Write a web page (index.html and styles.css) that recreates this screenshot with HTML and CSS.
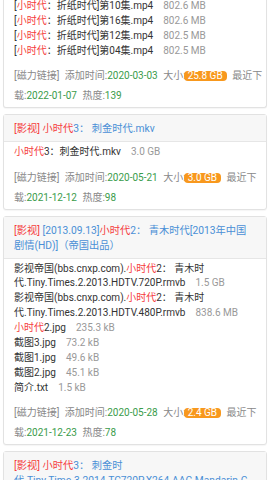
FILE: index.html
```html
<!DOCTYPE html>
<html lang="zh-CN">
<head>
<meta charset="utf-8">
<meta name="viewport" content="width=device-width, initial-scale=1">
<title>小时代 - 搜索结果</title>
<link rel="stylesheet" href="styles.css">
</head>
<body>
<div class="list">
  <div class="card card-cut">
    <div class="card-body">
      <ul class="files">
        <li>[<em class="hl">小时代</em>：折纸时代]第10集.mp4<span class="size">802.6 MB</span></li>
        <li>[<em class="hl">小时代</em>：折纸时代]第16集.mp4<span class="size">802.6 MB</span></li>
        <li>[<em class="hl">小时代</em>：折纸时代]第12集.mp4<span class="size">802.5 MB</span></li>
        <li>[<em class="hl">小时代</em>：折纸时代]第04集.mp4<span class="size">802.5 MB</span></li>
      </ul>
      <div class="meta">
        <span>[磁力链接]</span>
        <span>添加时间:<b>2020-03-03</b></span>
        <span>大小:<span class="badge">25.8 GB</span></span>
        <span>最近下载:<b>2022-01-07</b></span>
        <span>热度:<b>139</b></span>
      </div>
    </div>
  </div>

  <div class="card">
    <div class="card-head"><span class="tag">[影视]</span> <em class="hl">小时代</em>3： 刺金时代.mkv</div>
    <div class="card-body">
      <ul class="files">
        <li><em class="hl">小时代</em>3：刺金时代.mkv<span class="size">3.0 GB</span></li>
      </ul>
      <div class="meta">
        <span>[磁力链接]</span>
        <span>添加时间:<b>2020-05-21</b></span>
        <span>大小:<span class="badge">3.0 GB</span></span>
        <span>最近下载:<b>2021-12-12</b></span>
        <span>热度:<b>98</b></span>
      </div>
    </div>
  </div>

  <div class="card">
    <div class="card-head"><span class="tag">[影视]</span> [2013.09.13]<em class="hl">小时代</em>2： 青木时代[2013年中国剧情(HD)]（帝国出品）</div>
    <div class="card-body">
      <ul class="files">
        <li>影视帝国(bbs.cnxp.com).<em class="hl">小时代</em>2： 青木时代.Tiny.Times.2.2013.HDTV.720P.rmvb<span class="size">1.5 GB</span></li>
        <li>影视帝国(bbs.cnxp.com).<em class="hl">小时代</em>2： 青木时代.Tiny.Times.2.2013.HDTV.480P.rmvb<span class="size">838.6 MB</span></li>
        <li><em class="hl">小时代</em>2.jpg<span class="size">235.3 kB</span></li>
        <li>截图3.jpg<span class="size">73.2 kB</span></li>
        <li>截图1.jpg<span class="size">49.6 kB</span></li>
        <li>截图2.jpg<span class="size">45.1 kB</span></li>
        <li>简介.txt<span class="size">1.5 kB</span></li>
      </ul>
      <div class="meta">
        <span>[磁力链接]</span>
        <span>添加时间:<b>2020-05-28</b></span>
        <span>大小:<span class="badge">2.4 GB</span></span>
        <span>最近下载:<b>2021-12-23</b></span>
        <span>热度:<b>78</b></span>
      </div>
    </div>
  </div>

  <div class="card">
    <div class="card-head"><span class="tag">[影视]</span> <em class="hl">小时代</em>3： 刺金时代.Tiny.Time.3.2014.TC720P.X264.AAC.Mandarin.CHS.Mp4Ba</div>
    <div class="card-body">
      <ul class="files">
        <li><em class="hl">小时代</em>3：刺金时代.Tiny.Time.3.2014.TC720P.X264.AAC.Mandarin.CHS.Mp4Ba.mp4<span class="size">1.6 GB</span></li>
      </ul>
      <div class="meta">
        <span>[磁力链接]</span>
        <span>添加时间:<b>2020-05-20</b></span>
        <span>大小:<span class="badge">1.6 GB</span></span>
        <span>最近下载:<b>2021-12-10</b></span>
        <span>热度:<b>65</b></span>
      </div>
    </div>
  </div>
</div>
</body>
</html>
```

FILE: styles.css
```css
* {
  box-sizing: border-box;
}

html,
body {
  margin: 0;
  background: #ffffff;
}

body {
  font-family: Roboto, "Noto Sans CJK SC", sans-serif;
  font-size: 10px;
  color: #333333;
}

.list {
  display: flex;
  flex-direction: column;
  gap: 6px;
  padding: 0 3px;
}

.card {
  background: #ffffff;
  border: 1px solid #e2e2e2;
  border-radius: 3px;
  box-shadow: 0 1px 1px rgba(0, 0, 0, 0.04);
}

.card-cut {
  margin-top: -4px;
  border-top: none;
  border-top-left-radius: 0;
  border-top-right-radius: 0;
}

.card-head {
  background: #f7f7f7;
  border-bottom: 1px solid #e6e6e6;
  padding: 6px 12px 5px 10px;
  font-size: 10.25px;
  line-height: 15px;
  color: #4a8fd6;
  overflow-wrap: break-word;
}

.card-body {
  padding: 3px 3px 1px 10px;
}

.files {
  list-style: none;
  margin: 0;
  padding: 0;
  line-height: 14.9px;
  overflow-wrap: break-word;
}

.size {
  color: #999999;
  margin-left: 10px;
}

.hl {
  font-style: normal;
  color: #f53d3d;
}

.tag {
  color: #f53d3d;
}

.meta {
  margin-top: 7.5px;
  line-height: 20px;
  color: #888888;
}

.meta > span {
  margin-right: 3px;
}

.meta b {
  font-weight: normal;
  color: #3a9c4b;
}

.badge {
  display: inline-block;
  height: 10px;
  line-height: 10px;
  padding: 0 4px;
  margin-left: -2px;
  border-radius: 4px;
  background: #f8981d;
  color: #ffffff;
}
```
